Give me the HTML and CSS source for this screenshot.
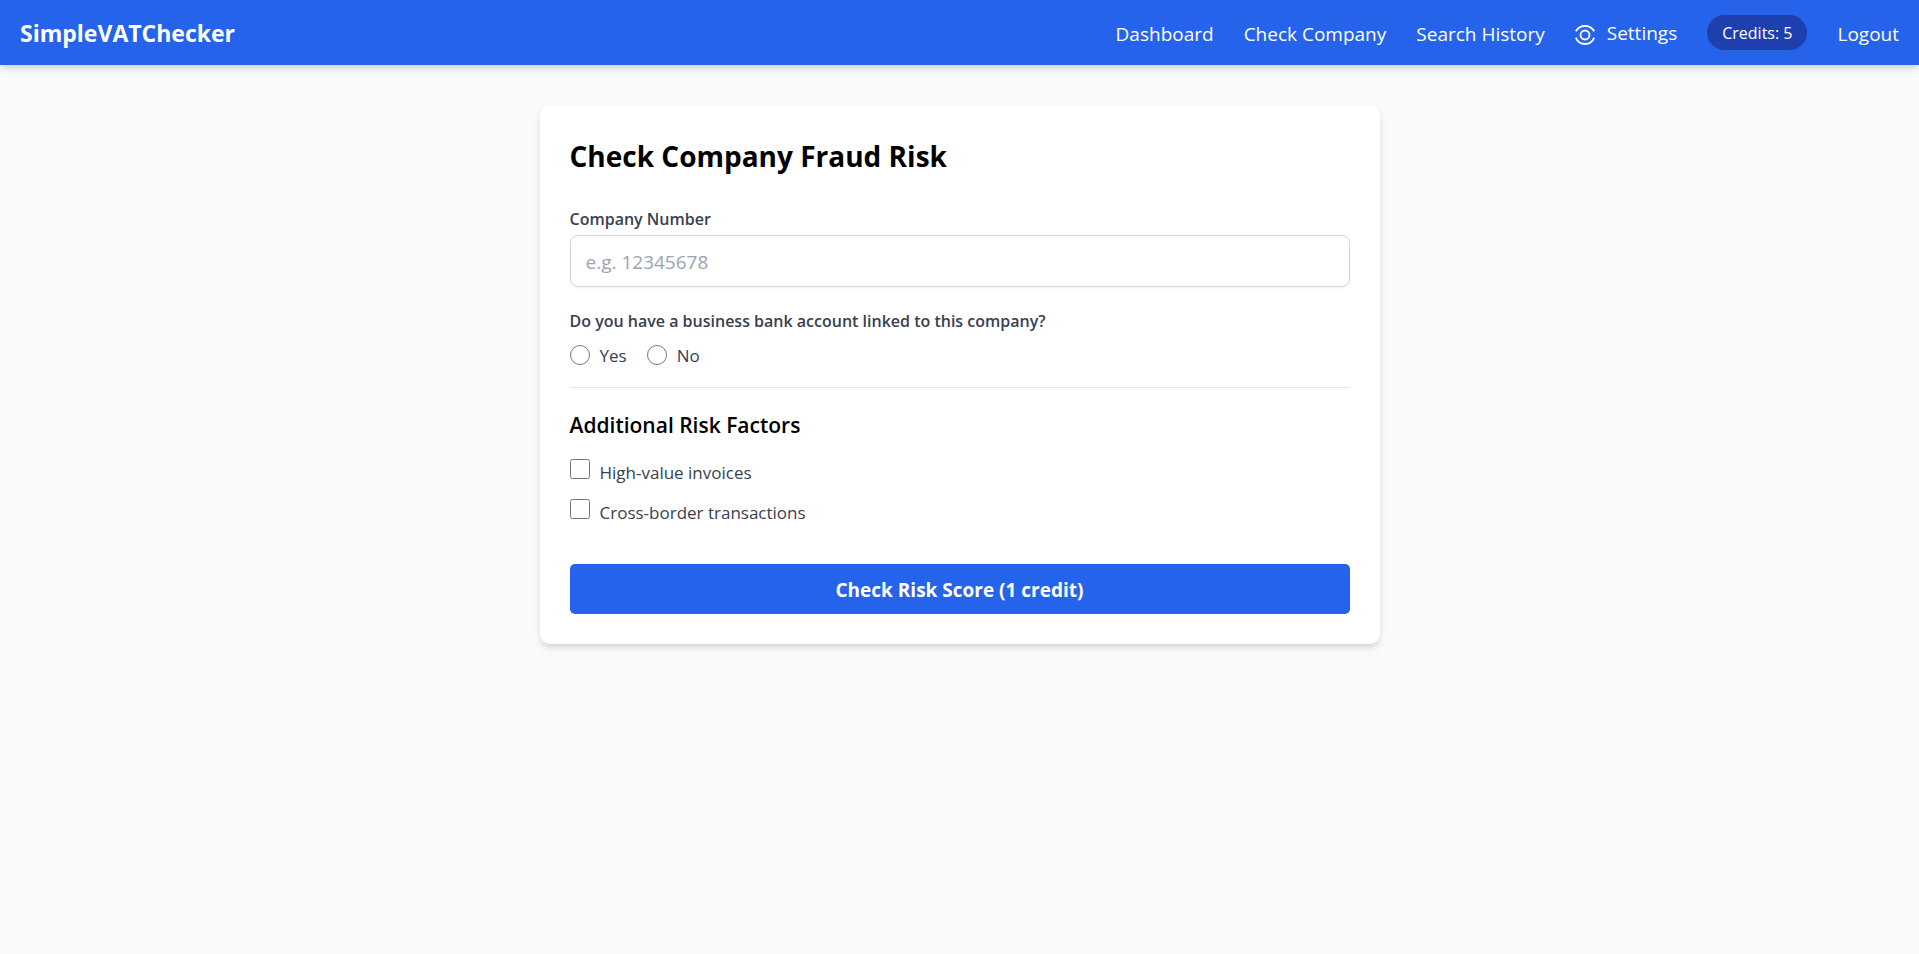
FILE: index.html
```html
<!DOCTYPE html>
<html lang="en">
<head>
<meta charset="utf-8">
<meta name="viewport" content="width=device-width, initial-scale=1">
<title>SimpleVATChecker</title>
<link rel="stylesheet" href="styles.css">
</head>
<body>
<header class="topbar">
  <a class="brand" href="#">SimpleVATChecker</a>
  <nav class="nav">
    <a class="nav-link" href="#">Dashboard</a>
    <a class="nav-link" href="#">Check Company</a>
    <a class="nav-link" href="#">Search History</a>
    <a class="settings" href="#">
      <svg class="settings-icon" viewBox="0 0 20 20" fill="none" stroke="currentColor" stroke-width="1.800" aria-hidden="true">
        <circle cx="10" cy="10" r="4.500"/>
        <path d="M.8 6.200C2.800 2.800 6.200 1 10 1s7.200 1.800 9.200 5.200M.8 12.600C2.300 16.600 5.800 19 10 19s7.700-2.400 9.200-6.400"/>
      </svg>
      <span>Settings</span>
    </a>
    <span class="credits">Credits: 5</span>
    <a class="nav-link" href="#">Logout</a>
  </nav>
</header>
<main class="page">
  <form class="card">
    <h1 class="title">Check Company Fraud Risk</h1>
    <label class="label" for="company">Company Number</label>
    <input class="input" id="company" type="text" placeholder="e.g. 12345678">
    <fieldset class="group">
      <legend class="label">Do you have a business bank account linked to this company?</legend>
      <div class="radios">
        <label class="choice"><input class="radio" type="radio" name="bank"><span>Yes</span></label>
        <label class="choice"><input class="radio" type="radio" name="bank"><span>No</span></label>
      </div>
    </fieldset>
    <section class="factors">
      <h2 class="subtitle">Additional Risk Factors</h2>
      <label class="check"><input class="box" type="checkbox"><span>High-value invoices</span></label>
      <label class="check"><input class="box" type="checkbox"><span>Cross-border transactions</span></label>
    </section>
    <button class="submit" type="button">Check Risk Score (1 credit)</button>
  </form>
</main>
</body>
</html>
```
FILE: styles.css
```css
* { box-sizing: border-box; }

body {
  margin: 0;
  min-height: 100vh;
  background: #f9fafb;
  color: #000;
  font-family: "Segoe UI", "Open Sans", "Noto Sans", sans-serif;
  font-size: 19px;
  line-height: 30px;
}

.topbar {
  display: flex;
  align-items: center;
  justify-content: space-between;
  min-height: 65px;
  padding: 0 20px;
  background: #2563eb;
  color: #fff;
  box-shadow: 0 5px 8px -1px rgba(0, 0, 0, 0.1), 0 3px 5px -2px rgba(0, 0, 0, 0.1);
}

.topbar a { color: inherit; text-decoration: none; }

.topbar .brand { padding-top: 2px; font-size: 23px; font-weight: 700; line-height: 35px; }

.nav { display: flex; align-items: center; gap: 30px; }

.nav-link { padding-top: 2px; }

.settings { display: flex; align-items: center; gap: 12px; }

.settings-icon { width: 20px; height: 20px; margin-top: 4px; }

.credits {
  padding: 6px 15px 4px;
  border-radius: 18px;
  background: #1e40af;
  font-size: 16px;
  line-height: 25px;
}

.page { padding: 40px 20px; }

.card {
  max-width: 840px;
  margin: 0 auto;
  padding: 30px;
  border-radius: 10px;
  background: #fff;
  box-shadow: 0 5px 8px -1px rgba(0, 0, 0, 0.1), 0 3px 5px -2px rgba(0, 0, 0, 0.1);
}

.title { margin: 0 0 28px; font-size: 28px; font-weight: 700; line-height: 42px; }

.label {
  display: block;
  padding: 0;
  color: #374151;
  font-size: 16px;
  font-weight: 600;
  line-height: 28px;
}

.input {
  display: block;
  width: 100%;
  margin-top: 2px;
  padding: 11px 15px 9px;
  border: 1px solid #d1d5db;
  border-radius: 8px;
  background: #fff;
  box-shadow: 0 1px 3px rgba(0, 0, 0, 0.05);
  color: #000;
  font: inherit;
}

.input::placeholder { color: #9ca3af; opacity: 1; }

.group { min-width: 0; margin: 20px 0 0; padding: 0; border: 0; }

.radios { display: flex; gap: 20px; margin-top: 6px; }

.choice, .check {
  display: flex;
  gap: 10px;
  color: #374151;
  font-size: 17px;
  line-height: 25px;
}

.choice { align-items: center; }

.radio, .box {
  flex: none;
  width: 20px;
  height: 20px;
  margin: 0;
}

.choice span { padding-top: 2px; }

.factors { margin-top: 19px; padding-top: 20px; border-top: 1px solid #e5e7eb; }

.subtitle { margin: 0 0 16px; font-size: 21px; font-weight: 600; line-height: 35px; }

.check { align-items: flex-start; height: 30px; }

.check span { padding-top: 1px; }

.check + .check { margin-top: 10px; }

.submit {
  display: block;
  width: 100%;
  margin-top: 35px;
  padding: 11px 20px 9px;
  border: 0;
  border-radius: 5px;
  background: #2563eb;
  color: #fff;
  font: inherit;
  font-weight: 700;
}
```
